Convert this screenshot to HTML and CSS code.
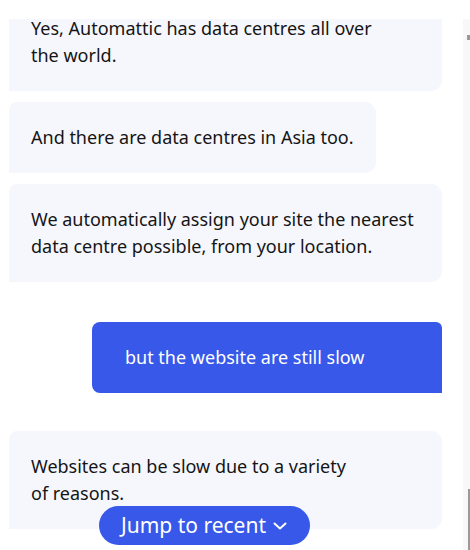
FILE: index.html
```html
<!DOCTYPE html>
<html lang="en">
<head>
<meta charset="utf-8">
<title>Chat</title>
<link rel="stylesheet" href="styles.css">
</head>
<body>
<div class="frame">
  <div class="chat">
    <div class="header"></div>
    <div class="viewport">
      <div class="messages">
        <div class="bubble bot">Yes, Automattic has data centres all over<br>the world.</div>
        <div class="bubble bot short">And there are data centres in Asia too.</div>
        <div class="bubble bot">We automatically assign your site the nearest<br>data centre possible, from your location.</div>
        <div class="bubble user">but the website are still slow</div>
        <div class="bubble bot">Websites can be slow due to a variety<br>of reasons.</div>
        <div class="bubble bot">There are several things you can check to<br>speed up your site.</div>
      </div>
      <div class="fade"></div>
      <button class="jump">Jump to recent
        <svg class="chev" width="16" height="16" viewBox="0 0 16 16" aria-hidden="true"><path d="M2.5 5.5 L8 10.5 L13.5 5.5" fill="none" stroke="#fff" stroke-width="2" stroke-linecap="round" stroke-linejoin="round"/></svg>
      </button>
    </div>
  </div>
  <div class="scrollbar">
    <div class="arrow"></div>
    <div class="thumb"></div>
  </div>
</div>
</body>
</html>
```
FILE: styles.css
```css
* { box-sizing: border-box; }
html, body { margin: 0; padding: 0; background: #fff; }
body {
  font-family: "Noto Sans", "Open Sans", sans-serif;
  color: #151515;
  width: 470px;
  height: 550px;
  overflow: hidden;
}
.frame {
  display: flex;
  height: 550px;
}
.chat {
  width: 442px;
  padding-left: 9px;
  display: flex;
  flex-direction: column;
  height: 550px;
}
.header {
  height: 19px;
  flex: none;
  background: #fff;
}
.viewport {
  position: relative;
  flex: 1;
  overflow: hidden;
}
.messages {
  margin-top: -26px;
  display: flex;
  flex-direction: column;
  align-items: flex-start;
}
.bubble {
  font-size: 18px;
  line-height: 27px;
  padding: 22px 22px;
  border-radius: 8px 11px 11px 0;
  white-space: nowrap;
}
.bot {
  background: #f6f7fd;
  width: 433px;
  margin-bottom: 11px;
}
.bot.short { width: 367px; }
.user {
  align-self: flex-end;
  width: 350px;
  background: #3858e9;
  color: #fff;
  padding-left: 33px;
  border-radius: 8px 6px 0 8px;
  margin-top: 29px;
  margin-bottom: 38px;
}
.fade {
  position: absolute;
  left: 0;
  right: 0;
  bottom: 0;
  height: 20px;
  background: linear-gradient(to bottom, rgba(255,255,255,0.6), #fff 50%);
}
.jump {
  position: absolute;
  left: 90px;
  bottom: 5px;
  height: 39px;
  width: 211px;
  border: none;
  border-radius: 20px;
  background: #3858e9;
  color: #fff;
  font-family: "Noto Sans", "Open Sans", sans-serif;
  font-size: 21px;
  display: flex;
  align-items: center;
  justify-content: center;
  gap: 6px;
  padding: 0 0 2px;
}
.chev { margin-top: 3px; }
.scrollbar {
  margin-left: 21px;
  margin-top: 19px;
  width: 7px;
  height: 531px;
  background: #f8f8fb;
  position: relative;
}
.arrow {
  position: absolute;
  left: 4px;
  top: 16px;
  width: 3px;
  height: 5px;
  background: #999;
}
.thumb {
  position: absolute;
  left: 5px;
  top: 470px;
  width: 2px;
  height: 70px;
  background: #9a9a9a;
}
```
